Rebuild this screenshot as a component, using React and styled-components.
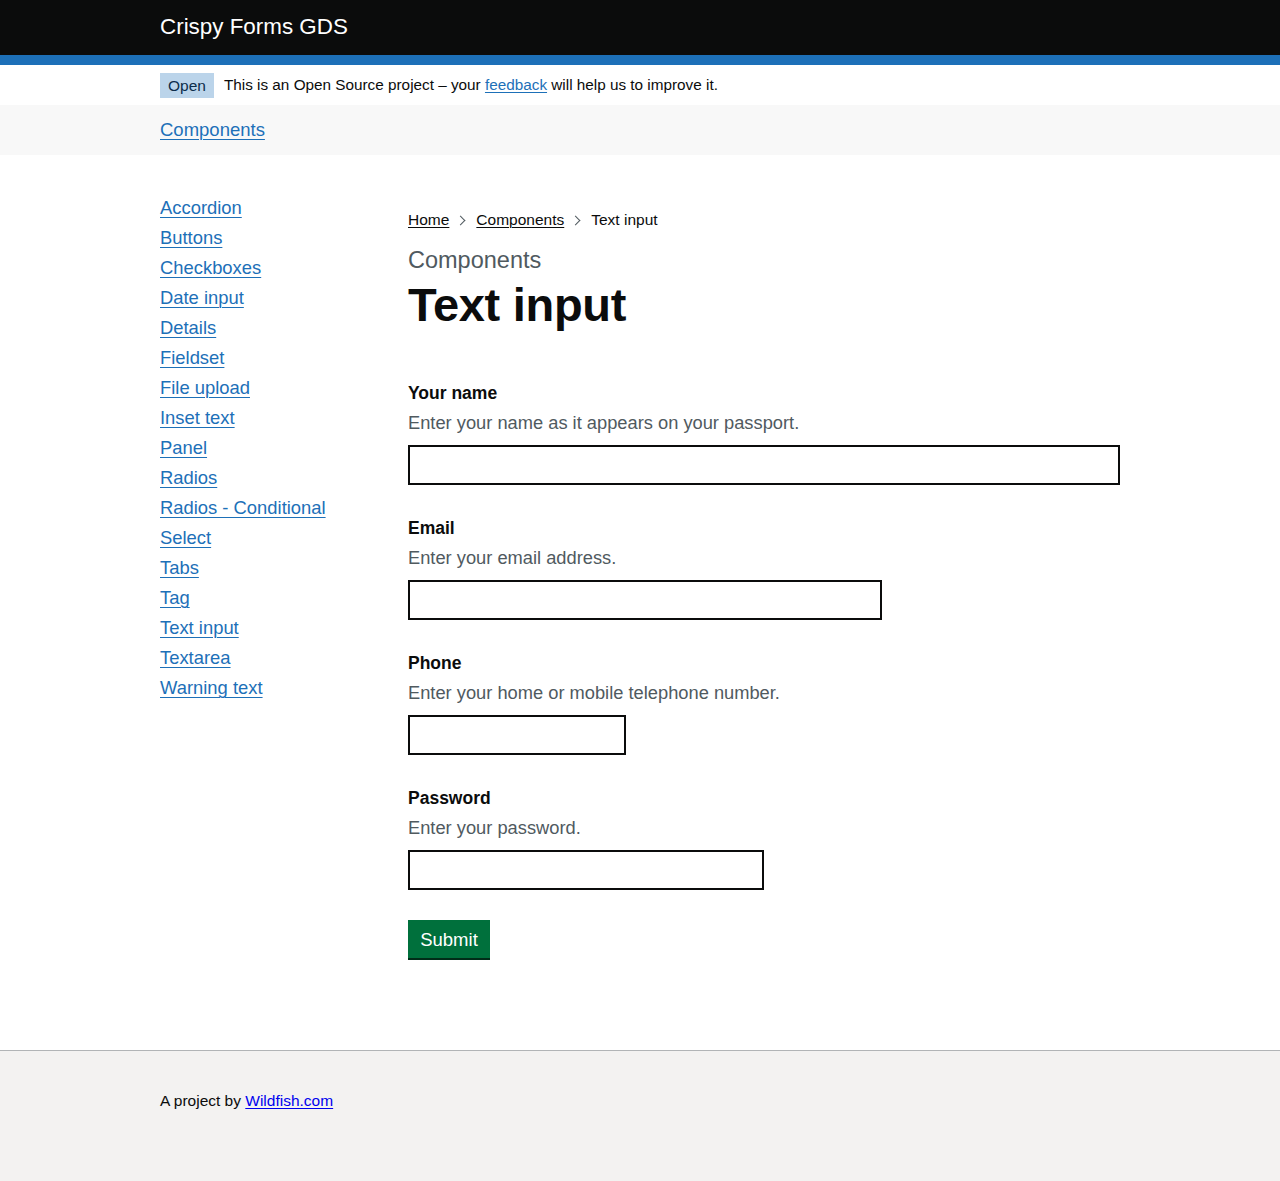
import React from "react";
import styled, { createGlobalStyle } from "styled-components";

const Global = createGlobalStyle`
  html, body { margin: 0; padding: 0; }
  body {
    font-family: "Liberation Sans", Arial, sans-serif;
    color: #0b0c0c;
    background: #fff;
    -webkit-font-smoothing: antialiased;
  }
  * { box-sizing: border-box; }
`;

const Container = styled.div`
  width: 960px;
  margin: 0 auto;
`;

const Header = styled.header`
  background: #0b0c0c;
  border-bottom: 10px solid #1d70b8;
`;

const HeaderInner = styled(Container)`
  height: 55px;
  display: flex;
  align-items: center;
`;

const ServiceName = styled.a`
  color: #fff;
  font-size: 22.4px;
  line-height: 30px;
  text-decoration: none;
  padding-bottom: 2px;
`;

const PhaseBanner = styled(Container)`
  display: flex;
  align-items: center;
  height: 40px;
  font-size: 15.3px;
  line-height: 20px;
`;

const Tag = styled.strong`
  display: inline-block;
  background: #bbd4ea;
  color: #0c2d4a;
  font-weight: 400;
  font-size: 15.5px;
  line-height: 17px;
  padding: 4px 8px 4px;
  margin-right: 10px;
`;

const Link = styled.a`
  color: ${(p) => p.$color || "#1d70b8"};
  text-decoration: underline;
  text-decoration-thickness: 1px;
  text-underline-offset: 0.16em;
`;

const NavBar = styled.div`
  background: #f8f8f8;
  height: 50px;
`;

const NavInner = styled(Container)`
  height: 50px;
  display: flex;
  align-items: center;
  font-size: 18.5px;
  line-height: 25px;
  padding-bottom: 2px;
`;

const Body = styled(Container)`
  display: grid;
  grid-template-columns: 232px 1fr;
  column-gap: 16px;
  padding-top: 40px;
  padding-bottom: 92px;
`;

const SideList = styled.ul`
  list-style: none;
  margin: 0;
  padding: 0;
  font-size: 18.4px;
  line-height: 25px;
`;

const SideItem = styled.li`
  margin-bottom: 5px;
`;

const Main = styled.main`
  display: flex;
  flex-direction: column;
`;

const Breadcrumbs = styled.ol`
  list-style: none;
  margin: 15px 0 15px;
  padding: 0;
  display: flex;
  font-size: 15.5px;
  line-height: 20px;
`;

const Crumb = styled.li`
  display: flex;
  align-items: center;
  &:not(:first-child)::before {
    content: "";
    display: inline-block;
    width: 6px;
    height: 6px;
    border-top: 1px solid #505a5f;
    border-right: 1px solid #505a5f;
    transform: rotate(45deg);
    margin: 0 12px 0 8px;
  }
`;

const Caption = styled.span`
  display: block;
  color: #505a5f;
  font-size: 23.5px;
  line-height: 30px;
  margin-bottom: 5px;
`;

const Heading = styled.h1`
  margin: 0 0 50px;
  font-size: 47px;
  line-height: 50px;
  font-weight: 700;
  letter-spacing: -0.3px;
`;

const FormGroup = styled.div`
  margin-bottom: 30px;
`;

const Label = styled.label`
  display: block;
  font-weight: 700;
  font-size: 17.5px;
  line-height: 25px;
  margin-bottom: 5px;
  padding-top: 1px;
  height: 25px;
`;

const Hint = styled.div`
  color: #505a5f;
  font-size: 18.3px;
  line-height: 25px;
  margin-bottom: 10px;
`;

const Input = styled.input`
  display: block;
  width: ${(p) => p.$w}px;
  height: 40px;
  border: 2px solid #0b0c0c;
  border-radius: 0;
  padding: 5px;
  font-family: inherit;
  font-size: 19px;
  background: #fff;
  outline: none;
`;

const Button = styled.button`
  align-self: flex-start;
  background: #00703c;
  color: #fff;
  border: 2px solid transparent;
  border-radius: 0;
  box-shadow: 0 2px 0 #002d18;
  font-family: inherit;
  font-size: 18.5px;
  line-height: 19px;
  padding: 8px 10px 7px;
  width: 82px;
  height: 38px;
  cursor: pointer;
`;

const Footer = styled.footer`
  background: #f3f2f1;
  border-top: 1px solid #b1b4b6;
  height: 131px;
`;

const FooterInner = styled(Container)`
  padding-top: 40px;
  font-size: 15.5px;
  line-height: 20px;
`;

const navItems = [
  "Accordion",
  "Buttons",
  "Checkboxes",
  "Date input",
  "Details",
  "Fieldset",
  "File upload",
  "Inset text",
  "Panel",
  "Radios",
  "Radios - Conditional",
  "Select",
  "Tabs",
  "Tag",
  "Text input",
  "Textarea",
  "Warning text",
];

const fields = [
  { id: "name", label: "Your name", hint: "Enter your name as it appears on your passport.", w: 712 },
  { id: "email", label: "Email", hint: "Enter your email address.", w: 474 },
  { id: "phone", label: "Phone", hint: "Enter your home or mobile telephone number.", w: 218 },
  { id: "password", label: "Password", hint: "Enter your password.", w: 356, type: "password" },
];

export default function App() {
  return (
    <>
      <Global />
      <Header>
        <HeaderInner>
          <ServiceName href="#">Crispy Forms GDS</ServiceName>
        </HeaderInner>
      </Header>
      <PhaseBanner>
        <Tag>Open</Tag>
        <span>
          This is an Open Source project – your <Link href="#">feedback</Link> will help us to improve it.
        </span>
      </PhaseBanner>
      <NavBar>
        <NavInner>
          <Link href="#">Components</Link>
        </NavInner>
      </NavBar>
      <Body>
        <nav>
          <SideList>
            {navItems.map((n) => (
              <SideItem key={n}>
                <Link href="#">{n}</Link>
              </SideItem>
            ))}
          </SideList>
        </nav>
        <Main>
          <Breadcrumbs>
            <Crumb>
              <Link href="#" $color="#0b0c0c">Home</Link>
            </Crumb>
            <Crumb>
              <Link href="#" $color="#0b0c0c">Components</Link>
            </Crumb>
            <Crumb>Text input</Crumb>
          </Breadcrumbs>
          <Caption>Components</Caption>
          <Heading>Text input</Heading>
          {fields.map((f) => (
            <FormGroup key={f.id}>
              <Label htmlFor={f.id}>{f.label}</Label>
              <Hint>{f.hint}</Hint>
              <Input id={f.id} type={f.type || "text"} $w={f.w} />
            </FormGroup>
          ))}
          <Button>Submit</Button>
        </Main>
      </Body>
      <Footer>
        <FooterInner>
          A project by <Link href="#" $color="#0000ee">Wildfish.com</Link>
        </FooterInner>
      </Footer>
    </>
  );
}
